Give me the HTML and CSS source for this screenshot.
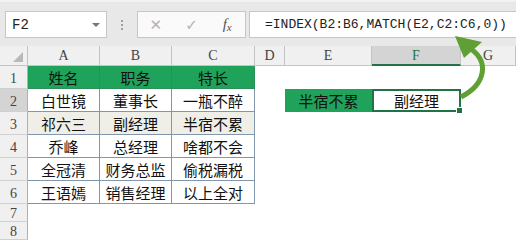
FILE: index.html
```html
<!DOCTYPE html>
<html lang="zh-CN">
<head>
    <meta charset="UTF-8">
    <title>INDEX MATCH</title>
    <link rel="stylesheet" href="styles.css">
</head>
<body>
    <div class="app">
        <div class="toolbar">
            <div class="namebox">
                <span>F2</span>
                <span class="caret"></span>
            </div>
            <div class="grip"><i></i><i></i><i></i></div>
            <div class="fx-buttons">
                <span class="btn btn-cancel">✕</span>
                <span class="btn btn-ok">✓</span>
                <span class="btn btn-fx">f<em>x</em></span>
            </div>
            <div class="formula">=INDEX(B2:B6,MATCH(E2,C2:C6,0))</div>
        </div>

        <div class="sheet">
            <!-- column headers -->
            <div class="corner">
                <svg width="10" height="10" viewBox="0 0 10 10"><polygon points="10,0 10,10 0,10" fill="#b9b9b9"/></svg>
            </div>
            <div class="ch">A</div>
            <div class="ch">B</div>
            <div class="ch">C</div>
            <div class="ch">D</div>
            <div class="ch">E</div>
            <div class="ch ch-active">F</div>
            <div class="ch">G</div>

            <!-- row 1 -->
            <div class="rh">1</div>
            <div class="cell head">姓名</div>
            <div class="cell head">职务</div>
            <div class="cell head">特长</div>
            <div></div><div></div><div></div><div></div>

            <!-- row 2 -->
            <div class="rh rh-active">2</div>
            <div class="cell">白世镜</div>
            <div class="cell">董事长</div>
            <div class="cell">一瓶不醉</div>
            <div></div>
            <div class="lookup">半宿不累</div>
            <div class="result">副经理</div>
            <div></div>

            <!-- row 3 -->
            <div class="rh">3</div>
            <div class="cell shade">祁六三</div>
            <div class="cell shade">副经理</div>
            <div class="cell shade">半宿不累</div>
            <div></div><div></div><div></div><div></div>

            <!-- row 4 -->
            <div class="rh">4</div>
            <div class="cell">乔峰</div>
            <div class="cell">总经理</div>
            <div class="cell">啥都不会</div>
            <div></div><div></div><div></div><div></div>

            <!-- row 5 -->
            <div class="rh">5</div>
            <div class="cell">全冠清</div>
            <div class="cell">财务总监</div>
            <div class="cell">偷税漏税</div>
            <div></div><div></div><div></div><div></div>

            <!-- row 6 -->
            <div class="rh">6</div>
            <div class="cell">王语嫣</div>
            <div class="cell">销售经理</div>
            <div class="cell">以上全对</div>
            <div></div><div></div><div></div><div></div>

            <div class="rh">7</div>
            <div></div><div></div><div></div><div></div><div></div><div></div><div></div>
            <div class="rh">8</div>
            <div></div><div></div><div></div><div></div><div></div><div></div><div></div>
        </div>

        <svg class="arrow" width="60" height="80" viewBox="440 28 60 80">
            <path d="M461 97 C 486 84, 489 62, 471 49" fill="none" stroke="#5f9f34" stroke-width="5"/>
            <polygon points="455,36 482,42 464,58" fill="#5f9f34"/>
        </svg>
    </div>
</body>
</html>
```

FILE: styles.css
```css
body {
    margin: 0;
    background: #fff;
    font-family: "Noto Sans CJK SC", sans-serif;
    overflow: hidden;
}
.app {
    position: relative;
    width: 516px;
    height: 241px;
    overflow: hidden;
}

/* formula bar */
.toolbar {
    display: flex;
    align-items: flex-start;
    height: 46px;
    box-sizing: border-box;
    padding: 11px 0 0 5px;
    background: #e8e8e8;
    border-top: 2px solid #f2f2f2;
}
.namebox {
    display: flex;
    align-items: center;
    justify-content: space-between;
    width: 102px;
    height: 27px;
    box-sizing: border-box;
    margin-top: -2px;
    padding: 0 6px 0 6px;
    background: #fff;
    border: 1px solid #c6c6c6;
    font-family: "Liberation Mono", monospace;
    font-size: 14px;
    color: #222;
}
.caret {
    width: 0;
    height: 0;
    border-left: 4px solid transparent;
    border-right: 4px solid transparent;
    border-top: 4px solid #777;
}
.grip {
    display: flex;
    flex-direction: column;
    align-items: center;
    justify-content: center;
    gap: 2px;
    width: 30px;
    height: 27px;
    margin-top: -2px;
}
.grip i {
    width: 2px;
    height: 2px;
    background: #a0a0a0;
}
.fx-buttons {
    display: flex;
    width: 109px;
    height: 27px;
    box-sizing: border-box;
    margin-top: -2px;
    background: #fafafa;
    border: 1px solid #c6c6c6;
}
.btn {
    display: flex;
    align-items: center;
    justify-content: center;
    width: 36px;
    color: #b3b3b3;
    font-size: 15px;
    font-family: "DejaVu Sans", sans-serif;
}
.btn-fx {
    font-family: "Liberation Serif", serif;
    font-style: italic;
    font-size: 15px;
    color: #555;
}
.btn-fx em {
    font-size: 11px;
    margin-top: 4px;
}
.formula {
    flex: 1;
    height: 27px;
    box-sizing: border-box;
    margin: -2px 0 0 3px;
    padding-left: 15px;
    background: #fff;
    border: 1px solid #c6c6c6;
    border-right: none;
    font-family: "Liberation Mono", monospace;
    font-size: 13px;
    line-height: 25px;
    color: #222;
    white-space: nowrap;
}

/* grid */
.sheet {
    display: grid;
    grid-template-columns: 28px 72px 72px 83px 30px 87px 89px 1fr;
    grid-template-rows: 20px repeat(6, 23px) 18px 18px;
}
.sheet > div {
    box-sizing: border-box;
}
.corner {
    display: flex;
    align-items: flex-end;
    justify-content: flex-end;
    padding: 0 4px 3px 0;
    background: #f0f0f0;
    border-right: 1px solid #c4c4c4;
    border-bottom: 1px solid #c4c4c4;
}
.ch {
    text-align: center;
    background: #f0f0f0;
    border-right: 1px solid #c4c4c4;
    border-bottom: 1px solid #c4c4c4;
    font-family: "Liberation Serif", serif;
    font-size: 14px;
    line-height: 20px;
    color: #444;
}
.ch-active {
    background: #d4d4d4;
    color: #217346;
    border-bottom: 2px solid #217346;
}
.rh {
    text-align: center;
    background: #f0f0f0;
    border-right: 1px solid #b0b0b0;
    border-bottom: 1px solid #d0d0d0;
    font-family: "Liberation Serif", serif;
    font-size: 14px;
    line-height: 26px;
    color: #444;
}
.sheet .rh:nth-last-child(-n+16) {
    line-height: 20px;
}
.rh-active {
    background: #d4d4d4;
}
.cell {
    display: flex;
    align-items: center;
    justify-content: center;
    border-right: 1px solid #8097ad;
    border-bottom: 1px solid #8097ad;
    font-size: 15px;
    color: #111;
}
.head {
    background: #1fa35b;
    border-right-color: #2f8f5a;
    border-bottom-color: #2f8f5a;
}
.shade {
    background: #efefe8;
}
.lookup {
    display: flex;
    align-items: center;
    justify-content: center;
    background: #1fa35b;
    font-size: 15px;
    color: #111;
}
.result {
    position: relative;
    display: flex;
    align-items: center;
    justify-content: center;
    border: 2px solid #217346;
    font-size: 15px;
    color: #111;
}
.result::after {
    content: "";
    position: absolute;
    right: -4px;
    bottom: -4px;
    width: 5px;
    height: 5px;
    background: #217346;
    border: 1px solid #fff;
}

.arrow {
    position: absolute;
    left: 440px;
    top: 28px;
    pointer-events: none;
}
```
